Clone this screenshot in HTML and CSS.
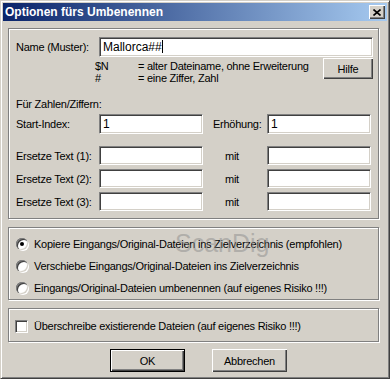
FILE: index.html
```html
<!DOCTYPE html>
<html lang="de">
<head>
    <meta charset="UTF-8">
    <title>Optionen fürs Umbenennen</title>
    <link rel="stylesheet" href="styles.css">
</head>
<body>

<div class="window">
    <div class="titlebar">
        <span class="title">Optionen fürs Umbenennen</span>
        <span class="close">
            <svg width="8" height="7" viewBox="0 0 8 7"><path d="M0.5 0.5 L7.5 6.5 M7.5 0.5 L0.5 6.5" stroke="#000" stroke-width="1.6" fill="none"/></svg>
        </span>
    </div>

    <div class="content">
        <!-- Muster und Zahlen -->
        <div class="group g1">
            <div class="row name-row">
                <span class="lbl">Name (Muster):</span>
                <div class="field wide">Mallorca##<span class="caret"></span></div>
            </div>
            <div class="legend-row">
                <div class="legend">
                    <div><span class="sym">$N</span>= alter Dateiname, ohne Erweiterung</div>
                    <div><span class="sym">#</span>= eine Ziffer, Zahl</div>
                </div>
                <div class="btn hilfe">Hilfe</div>
            </div>
            <div class="section">Für Zahlen/Ziffern:</div>
            <div class="row start-row">
                <span class="lbl">Start-Index:</span>
                <div class="field">1</div>
                <span class="mid">Erhöhung:</span>
                <div class="field">1</div>
            </div>
            <div class="row repl-row first">
                <span class="lbl">Ersetze Text (1):</span>
                <div class="field"></div>
                <span class="mid mit">mit</span>
                <div class="field"></div>
            </div>
            <div class="row repl-row">
                <span class="lbl">Ersetze Text (2):</span>
                <div class="field"></div>
                <span class="mid mit">mit</span>
                <div class="field"></div>
            </div>
            <div class="row repl-row">
                <span class="lbl">Ersetze Text (3):</span>
                <div class="field"></div>
                <span class="mid mit">mit</span>
                <div class="field"></div>
            </div>
        </div>

        <!-- Eingangsdateien -->
        <div class="group g2">
            <div class="opt"><span class="radio checked"></span>Kopiere Eingangs/Original-Dateien ins Zielverzeichnis (empfohlen)</div>
            <div class="opt"><span class="radio"></span>Verschiebe Eingangs/Original-Dateien ins Zielverzeichnis</div>
            <div class="opt"><span class="radio"></span>Eingangs/Original-Dateien umbenennen (auf eigenes Risiko !!!)</div>
            <span class="watermark">ScanDig</span>
        </div>

        <div class="group g3">
            <div class="opt"><span class="check"></span>Überschreibe existierende Dateien (auf eigenes Risiko !!!)</div>
        </div>

        <div class="buttons">
            <div class="btn default">OK</div>
            <div class="btn">Abbrechen</div>
        </div>
    </div>
</div>

</body>
</html>
```

FILE: styles.css
```css
body {
    margin: 0;
    font-family: 'Liberation Sans', Arial, sans-serif;
    font-size: 11px;
    letter-spacing: -0.25px;
    color: #000;
    background: #d4d0c8;
}
.window {
    width: 390px;
    height: 379px;
    box-sizing: border-box;
    background: #d4d0c8;
    border: 1px solid;
    border-color: #d4d0c8 #404040 #404040 #d4d0c8;
    box-shadow: inset 1px 1px #fff, inset -1px -1px #808080;
    padding: 2px;
}
.titlebar {
    height: 18px;
    display: flex;
    align-items: center;
    justify-content: space-between;
    background: linear-gradient(to right, #0a246a, #a6caf0);
    color: #fff;
    padding-left: 2px;
}
.title {
    font-weight: bold;
    font-size: 12px;
    letter-spacing: 0;
}
.close {
    width: 16px;
    height: 14px;
    margin-right: 2px;
    box-sizing: border-box;
    background: #d4d0c8;
    box-shadow: inset 1px 1px #fff, inset -1px -1px #404040, inset -2px -2px #808080;
    display: flex;
    align-items: center;
    justify-content: center;
}
.content {
    padding: 7px 0 0 5px;
}
.group {
    width: 371px;
    box-sizing: border-box;
    border: 1px solid #808080;
    box-shadow: inset 1px 1px #fff, 1px 1px #fff;
    padding-left: 7px;
}
.g1 {
    padding-top: 8px;
    padding-bottom: 7px;
}
.row {
    display: flex;
    align-items: center;
}
.lbl {
    width: 83px;
}
.field {
    width: 104px;
    height: 20px;
    box-sizing: border-box;
    background: #fff;
    border: 1px solid;
    border-color: #808080 #fff #fff #808080;
    box-shadow: inset 1px 1px #404040, inset -1px -1px #d4d0c8;
    padding: 0 3px;
    line-height: 18px;
    font-size: 12px;
    letter-spacing: 0;
}
.field.wide {
    width: 274px;
}
.caret {
    display: inline-block;
    width: 1px;
    height: 13px;
    background: #000;
    vertical-align: -2px;
}
.legend-row {
    display: flex;
    align-items: flex-start;
    margin-top: 1px;
    height: 24px;
}
.legend {
    margin-left: 79px;
    padding-top: 2px;
    line-height: 12px;
    width: 228px;
}
.sym {
    display: inline-block;
    width: 43px;
}
.btn {
    height: 23px;
    width: 75px;
    box-sizing: border-box;
    background: #d4d0c8;
    box-shadow: inset 1px 1px #fff, inset -1px -1px #404040, inset -2px -2px #808080;
    display: flex;
    align-items: center;
    justify-content: center;
}
.hilfe {
    width: 50px;
    height: 21px;
}
.btn.default {
    border: 1px solid #000;
}
.section {
    margin-top: 16px;
    line-height: 12px;
}
.start-row {
    margin-top: 4px;
}
.mid {
    width: 64px;
    padding-left: 10px;
    box-sizing: border-box;
}
.mid.mit {
    padding-left: 22px;
}
.repl-row {
    margin-top: 4px;
}
.repl-row .field {
    height: 19px;
}
.repl-row.first {
    margin-top: 12px;
}
.g2 {
    position: relative;
    margin-top: 8px;
    padding-top: 5px;
    padding-left: 7px;
}
.opt {
    height: 22px;
    display: flex;
    align-items: center;
}
.radio {
    width: 12px;
    height: 12px;
    border-radius: 50%;
    background: #fff;
    box-shadow: inset 1px 1px 0 #808080, inset 2px 2px 0 #404040, inset -1px -1px 0 #d4d0c8, 1px 1px 0 #fff;
    margin-right: 6px;
    display: flex;
    align-items: center;
    justify-content: center;
}
.radio.checked::after {
    content: '';
    width: 4px;
    height: 4px;
    border-radius: 50%;
    background: #000;
}
.watermark {
    position: absolute;
    left: 166px;
    top: 1px;
    font-size: 25px;
    letter-spacing: 0;
    color: rgba(140, 140, 140, 0.5);
}
.g3 {
    margin-top: 8px;
    padding: 6px 0 4px 6px;
}
.check {
    width: 13px;
    height: 13px;
    box-sizing: border-box;
    background: #fff;
    border: 1px solid;
    border-color: #808080 #fff #fff #808080;
    box-shadow: inset 1px 1px #404040, inset -1px -1px #d4d0c8;
    margin-right: 6px;
}
.buttons {
    display: flex;
    gap: 27px;
    padding-left: 102px;
    margin-top: 7px;
}
```
